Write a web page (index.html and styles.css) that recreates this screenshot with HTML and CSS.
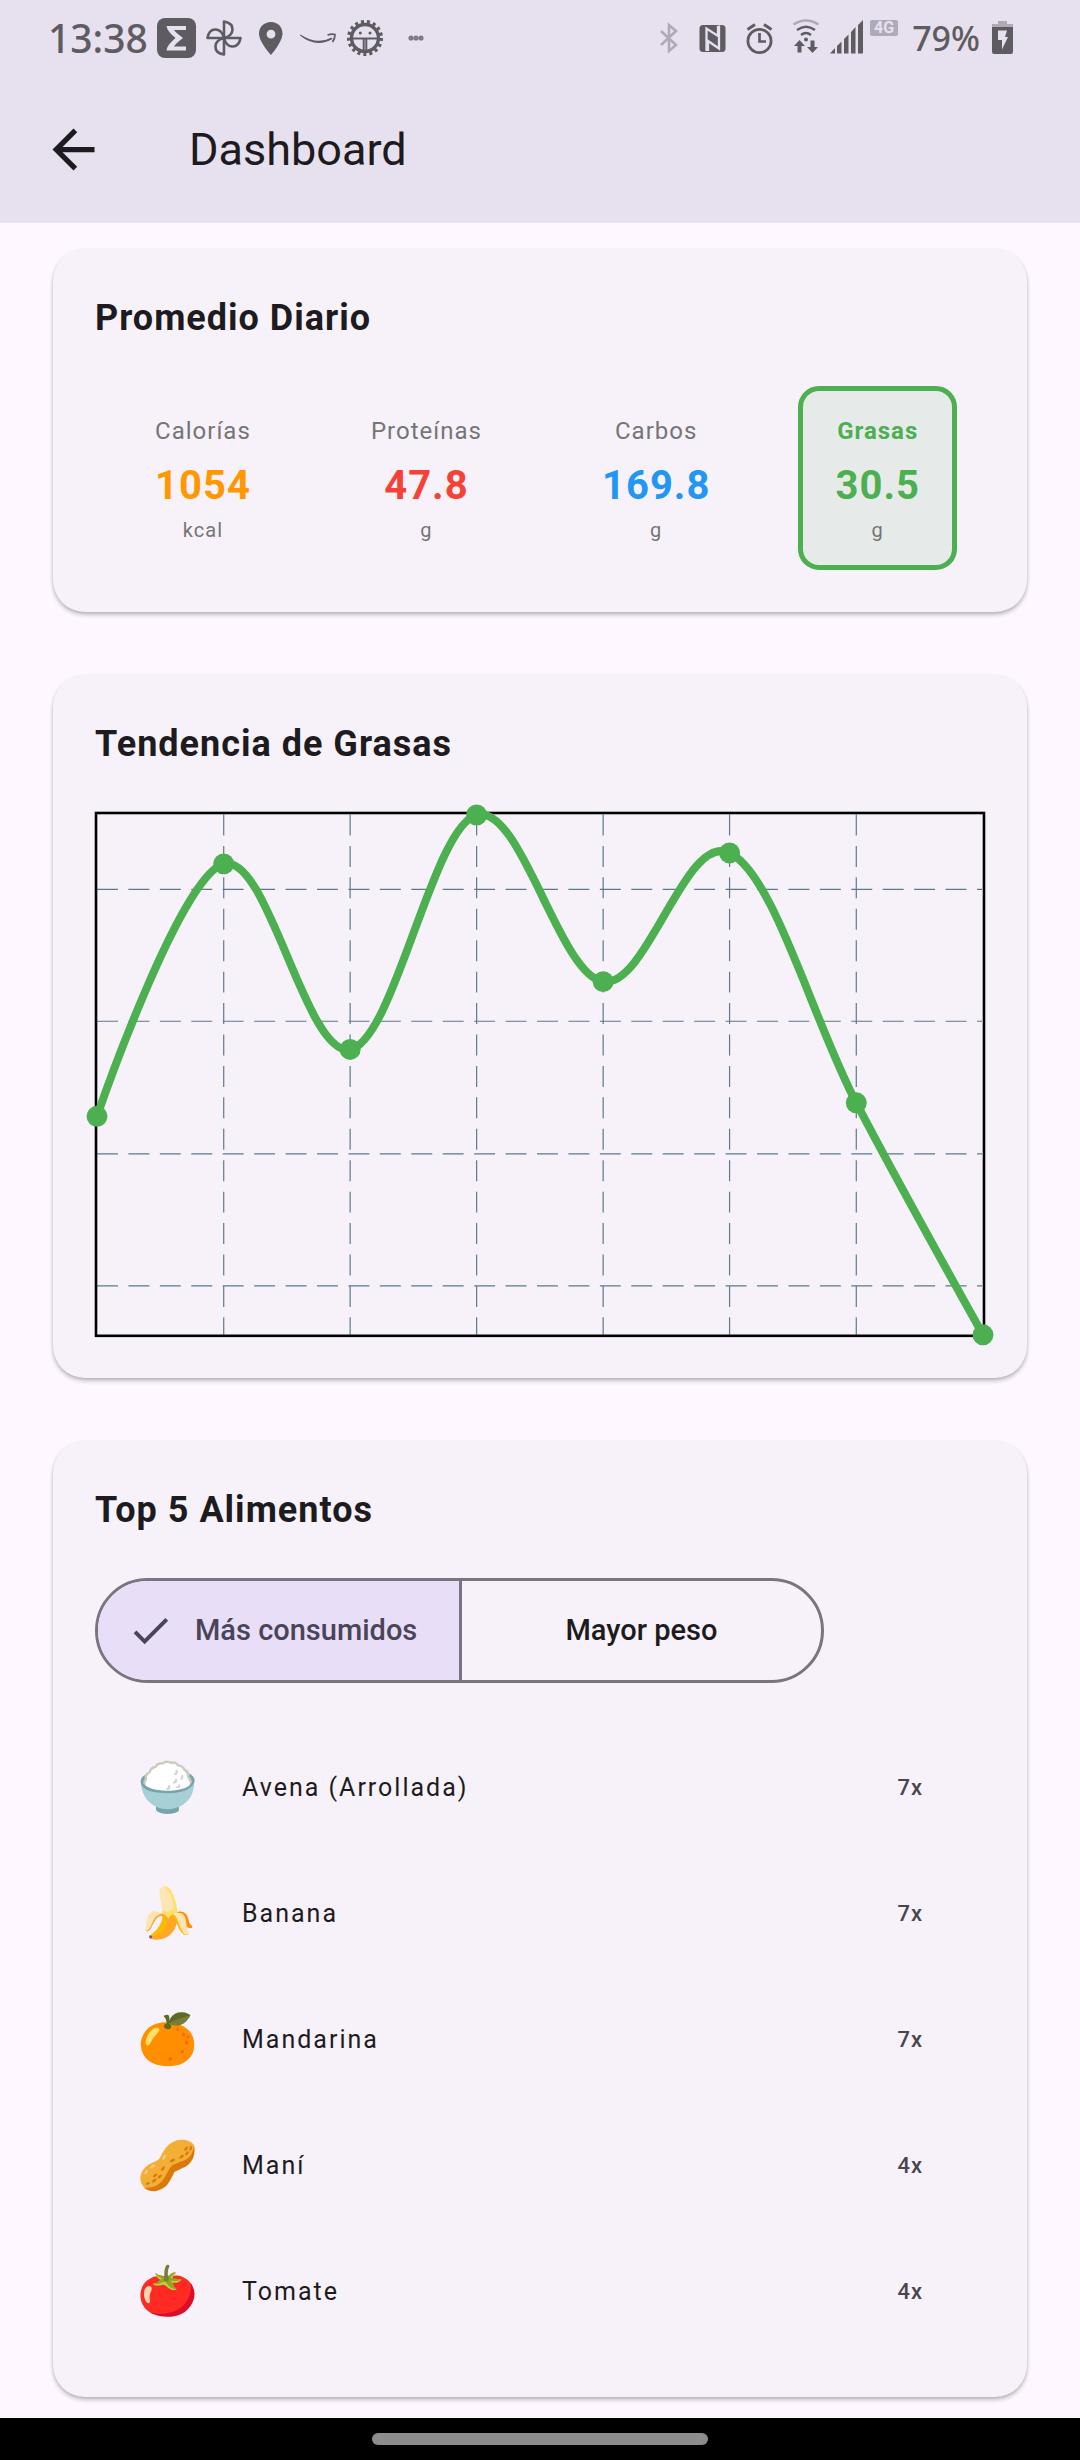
FILE: index.html
```html
<!DOCTYPE html>
<html lang="es">
<head>
<meta charset="utf-8">
<meta name="viewport" content="width=device-width, initial-scale=1">
<title>Dashboard</title>
<link rel="stylesheet" href="styles.css">
</head>
<body>
<header class="top">
  <div class="status">
    <span class="clock">13:38</span>
    <div class="status-group">
      <svg class="ic" viewBox="0 0 40 40"><rect x="0" y="0" width="39" height="40" rx="8" fill="#5e5b61"/><path d="M9.500 8H29V12H17Q17.500 13.500 26 20Q17.500 26.500 17 28.500H29V32.500H9.500Q10 27 18.500 20Q10 13 9.500 8Z" fill="#e7e1ef"/></svg>
      <svg class="ic" viewBox="0 0 40 40" fill="none" stroke="#5e5b61" stroke-width="2.600" stroke-linejoin="round"><path d="M20 20V3.500Q29 5 28.500 12Q28 18 20 20Z"/><path d="M20 20H36.500Q35 29 28 28.500Q22 28 20 20Z"/><path d="M20 20V36.500Q11 35 11.500 28Q12 22 20 20Z"/><path d="M20 20H3.500Q5 11 12 11.500Q18 12 20 20Z"/></svg>
      <svg class="ic" viewBox="0 0 40 40"><path fill="#5e5b61" fill-rule="evenodd" d="M20 4C13 4 8 9 8 15.500C8 24 20 37 20 37C20 37 31.500 24 31.500 15.500C31.500 9 27 4 20 4ZM20 11.800A4.400 4.400 0 1 1 20 20.600A4.400 4.400 0 1 1 20 11.800Z"/></svg>
      <svg class="ic" viewBox="0 0 40 40"><path fill="#5e5b61" d="M2.500 16.500Q19 27.500 33.500 19.500L34.500 21Q18 30.500 2 17.500Z"/><path fill="none" stroke="#5e5b61" stroke-width="1.800" d="M29.500 17Q34 15.500 37 16.500Q37 20.500 34.500 24"/></svg>
      <svg class="ic" viewBox="0 0 40 40"><circle cx="20" cy="20" r="13.500" fill="none" stroke="#5e5b61" stroke-width="3.400"/><circle cx="20" cy="20" r="16.300" fill="none" stroke="#5e5b61" stroke-width="3.500" stroke-dasharray="3 3.020"/><path d="M7 20.500H33M18.700 21V34M21.300 21V34" stroke="#5e5b61" stroke-width="2"/><circle cx="15.300" cy="15" r="1.500" fill="#5e5b61"/><circle cx="25" cy="15" r="1.500" fill="#5e5b61"/></svg>
      <svg class="ic" viewBox="0 0 40 40" fill="#7d7a80"><circle cx="19" cy="20" r="2.600"/><circle cx="24" cy="20" r="2.600"/><circle cx="29" cy="20" r="2.600"/></svg>
    </div>
    <div class="status-group status-right">
      <svg class="ic" viewBox="0 0 40 40" fill="none" stroke="#b0aab8" stroke-width="2.600"><path d="M16 13L31 27L24 33V7L31 13L16 27"/></svg>
      <svg class="ic" viewBox="0 0 40 40"><rect x="7.500" y="7" width="26" height="27" rx="3.500" fill="#5e5b61"/><path d="M14.500 33V10.500L26 18V8M27 7.500V30.500L16 23V33" fill="none" stroke="#e7e1ef" stroke-width="2.300"/></svg>
      <svg class="ic" viewBox="0 0 40 40" fill="none" stroke="#5e5b61" stroke-width="2.700"><circle cx="20.500" cy="23" r="11.600"/><path d="M20.500 15V23.500H27"/><path d="M8.500 11.500L16 6.500M25 6.500L32.500 11.500" stroke-width="3"/></svg>
      <svg class="ic ic-wifi" viewBox="0 0 36 40" fill="none" stroke="#5e5b61" stroke-width="2.400"><path stroke="#b0aab8" d="M7.500 6.500Q20 -1.500 32.500 6.500"/><path d="M11 12Q20 5.500 29 12M15 17Q20 13 25 17"/><circle cx="20" cy="21.500" r="2" fill="#5e5b61" stroke="none"/><path fill="#5e5b61" stroke="none" d="M13.500 22L19 28H15.500V34.500H11.500V28H8ZM24.500 22.500H28.500V29H32L26.500 35L21 29H24.500Z"/></svg>
      <svg class="ic ic-signal" viewBox="0 0 34 40" fill="#5e5b61"><path d="M1 35.500L6 30V35.500ZM8 35.500V28L12.500 23.500V35.500ZM15 35.500V21L19.500 16.500V35.500ZM22 35.500V14L26.500 9V35.500ZM29 35.500V7L34 2V35.500Z"/></svg>
      <span class="net">4G</span>
    </div>
    <span class="percent">79%</span>
    <svg class="ic ic-battery" viewBox="0 0 22 40"><path fill="#b0aab8" d="M6 3H15V6H21V9H0V6H6Z"/><path fill="#5e5b61" d="M0 9H21V33.500Q21 36 19 36H2Q0 36 0 33.500Z"/><path fill="#e7e1ef" d="M6 12.500H15L13 19H16L10 31.500V22H6Z"/></svg>
  </div>
  <div class="appbar">
    <button class="back" type="button" aria-label="Volver"><svg viewBox="0 0 24 24"><path fill="#1d1b20" d="M20 11H7.830l5.590-5.590L12 4l-8 8 8 8 1.410-1.410L7.830 13H20v-2z"/></svg></button>
    <h1 class="app-title">Dashboard</h1>
  </div>
</header>

<main class="content">
  <section class="card">
    <h2 class="card-title">Promedio Diario</h2>
    <div class="stats">
      <button class="stat" type="button"><span class="stat-label">Calorías</span><span class="stat-value calories">1054</span><span class="stat-unit">kcal</span></button>
      <button class="stat" type="button"><span class="stat-label">Proteínas</span><span class="stat-value protein">47.8</span><span class="stat-unit">g</span></button>
      <button class="stat" type="button"><span class="stat-label">Carbos</span><span class="stat-value carbs">169.8</span><span class="stat-unit">g</span></button>
      <button class="stat selected" type="button" aria-pressed="true"><span class="stat-label">Grasas</span><span class="stat-value fat">30.5</span><span class="stat-unit">g</span></button>
    </div>
  </section>

  <section class="card">
    <h2 class="card-title">Tendencia de Grasas</h2>
    <svg class="chart" viewBox="0 0 892 525" role="img" aria-label="Tendencia de Grasas">
      <g fill="none" stroke="#5b7a8c" stroke-width="1.200" stroke-dasharray="21 10.500">
        <path d="M2 77.500H889M2 209.700H889M2 342.700H889M2 475H889"/>
        <path d="M129 2.500V524M255.700 2.500V524M382.500 2.500V524M509.300 2.500V524M636 2.500V524M763 2.500V524"/>
      </g>
      <rect x="1" y="1" width="890" height="524" fill="none" stroke="#000" stroke-width="2.600"/>
      <path fill="none" stroke="#4caf50" stroke-width="8" stroke-linecap="round" d="M2 305C2 305 85 63.700 129 52C173.300 40.300 211.400 246.600 255.700 238C300 229.400 338.200 14.900 382.500 3C426.800 -8.900 465 163.300 509.300 170C553.600 176.700 591.700 19.800 636 41C680.300 62.200 718.700 207.100 763 291.500C807.300 375.900 890 524 890 524"/>
      <g fill="#4caf50"><circle cx="2" cy="305" r="10.500"/><circle cx="129" cy="52" r="10.500"/><circle cx="255.700" cy="238" r="10.500"/><circle cx="382.500" cy="3" r="10.500"/><circle cx="509.300" cy="170" r="10.500"/><circle cx="636" cy="41" r="10.500"/><circle cx="763" cy="291.500" r="10.500"/><circle cx="890" cy="524" r="10.500"/></g>
    </svg>
  </section>

  <section class="card">
    <h2 class="card-title">Top 5 Alimentos</h2>
    <div class="segments">
      <button class="segment active" type="button" aria-pressed="true"><svg class="check" viewBox="0 0 24 24"><path fill="#4a4458" d="M9 16.170L4.830 12l-1.420 1.410L9 19 21 7l-1.410-1.410z"/></svg>Más consumidos</button>
      <button class="segment" type="button" aria-pressed="false">Mayor peso</button>
    </div>
    <ul class="foods">
      <li class="food"><span class="food-icon">🍚</span><span class="food-name">Avena (Arrollada)</span><span class="food-count">7x</span></li>
      <li class="food"><span class="food-icon">🍌</span><span class="food-name">Banana</span><span class="food-count">7x</span></li>
      <li class="food"><span class="food-icon">🍊</span><span class="food-name">Mandarina</span><span class="food-count">7x</span></li>
      <li class="food"><span class="food-icon">🥜</span><span class="food-name">Maní</span><span class="food-count">4x</span></li>
      <li class="food"><span class="food-icon">🍅</span><span class="food-name">Tomate</span><span class="food-count">4x</span></li>
    </ul>
  </section>
</main>

<footer class="navbar"><span class="handle"></span></footer>
</body>
</html>
```
FILE: styles.css
```css
* {
  box-sizing: border-box;
}

body {
  margin: 0;
  min-height: 100vh;
  display: flex;
  flex-direction: column;
  background: #fef7ff;
  color: #1d1b20;
  font-family: Roboto, "Liberation Sans", sans-serif;
}

button {
  margin: 0;
  padding: 0;
  border: 0;
  background: none;
  color: inherit;
  font: inherit;
}

.top {
  background: #e7e1ef;
}

/* Status bar */
.status {
  display: flex;
  align-items: center;
  height: 76px;
  padding: 0 66px 0 48px;
  color: #5e5b61;
  font-family: "Noto Sans", sans-serif;
}

.clock {
  font-size: 39px;
  line-height: 44px;
  font-weight: 500;
  margin-right: 9px;
}

.status-group {
  display: flex;
  align-items: center;
  gap: 7px;
}

.status-right {
  margin-left: auto;
}

.ic {
  display: block;
  width: 40px;
  height: 40px;
}

.ic-wifi {
  width: 36px;
}

.ic-signal {
  width: 34px;
}

.ic-battery {
  width: 22px;
}

.net {
  align-self: flex-start;
  margin-top: 2px;
  width: 28px;
  border-radius: 2px;
  background: #b0aab8;
  color: #e7e1ef;
  font-family: Roboto, sans-serif;
  font-size: 16px;
  line-height: 16px;
  font-weight: 700;
  text-align: center;
}

.percent {
  margin: 0 12px 0 14px;
  font-size: 34px;
  line-height: 40px;
  font-weight: 500;
}

/* App bar */
.appbar {
  display: flex;
  align-items: center;
  gap: 84px;
  height: 147px;
  padding: 0 42px;
}

.back,
.back svg {
  display: block;
  width: 63px;
  height: 63px;
}

.app-title {
  margin: 0;
  font-size: 45px;
  line-height: 56px;
  font-weight: 400;
}

/* Cards */
.content {
  flex: 1;
  display: flex;
  flex-direction: column;
  gap: 63px;
  padding: 26px 53px 21px;
}

.card {
  padding: 42px;
  border-radius: 32px;
  background: #f7f2fa;
  box-shadow: 0 3px 4px rgba(0, 0, 0, 0.22), 0 1px 3px rgba(0, 0, 0, 0.1);
}

.card-title {
  margin: 0 0 41px;
  font-size: 36px;
  line-height: 54px;
  font-weight: 700;
  letter-spacing: 1px;
}

.stats {
  display: flex;
  justify-content: space-around;
}

.stat {
  display: flex;
  flex-direction: column;
  align-items: center;
  padding: 27px 32px 26px;
  border-radius: 21px;
  color: #757575;
  letter-spacing: 1px;
}

.stat.selected {
  padding: 22px 32px 21px;
  border: 5px solid #4caf50;
  background: #e6ebe9;
}

.stat-label {
  margin-bottom: 11px;
  font-size: 24px;
  line-height: 36px;
}

.selected .stat-label {
  color: #4caf50;
  font-weight: 700;
}

.stat-value {
  margin-bottom: 4px;
  font-size: 40px;
  line-height: 52px;
  font-weight: 700;
}

.stat-unit {
  font-size: 20px;
  line-height: 28px;
}

.calories {
  color: #ff9800;
}

.protein {
  color: #f44336;
}

.carbs {
  color: #2196f3;
}

.fat {
  color: #4caf50;
}

.chart {
  display: block;
  width: 100%;
  overflow: visible;
}

/* Segmented control */
.segments {
  display: inline-grid;
  grid-template-columns: 1fr 1fr;
  vertical-align: top;
  border: 3px solid #79747e;
  border-radius: 53px;
  overflow: hidden;
}

.segment {
  display: flex;
  align-items: center;
  justify-content: center;
  height: 99px;
  padding: 0 42px 0 29px;
  font-size: 29px;
  line-height: 40px;
  font-weight: 500;
}

.segment + .segment {
  padding: 0 30px;
  border-left: 3px solid #79747e;
}

.segment.active {
  background: #e8def8;
  color: #4a4458;
}

.check {
  width: 47px;
  height: 47px;
  margin-right: 21px;
}

/* Food list */
.foods {
  margin: 42px 0 0;
  padding: 0;
  list-style: none;
}

.food {
  display: flex;
  align-items: center;
  height: 126px;
  padding: 0 62px 0 42px;
  font-size: 25px;
  line-height: 40px;
  letter-spacing: 2px;
}

.food-icon {
  width: 64px;
  margin-right: 41px;
  font-size: 49px;
  line-height: 64px;
  letter-spacing: 0;
}

.food-name {
  flex: 1;
}

.food-count {
  color: #49454f;
  font-size: 22px;
  font-weight: 500;
  letter-spacing: 1px;
}

/* System navigation bar */
.navbar {
  display: flex;
  align-items: center;
  justify-content: center;
  height: 42px;
  background: #000;
}

.handle {
  width: 336px;
  height: 12px;
  border-radius: 6px;
  background: #8c8c8c;
}
```
